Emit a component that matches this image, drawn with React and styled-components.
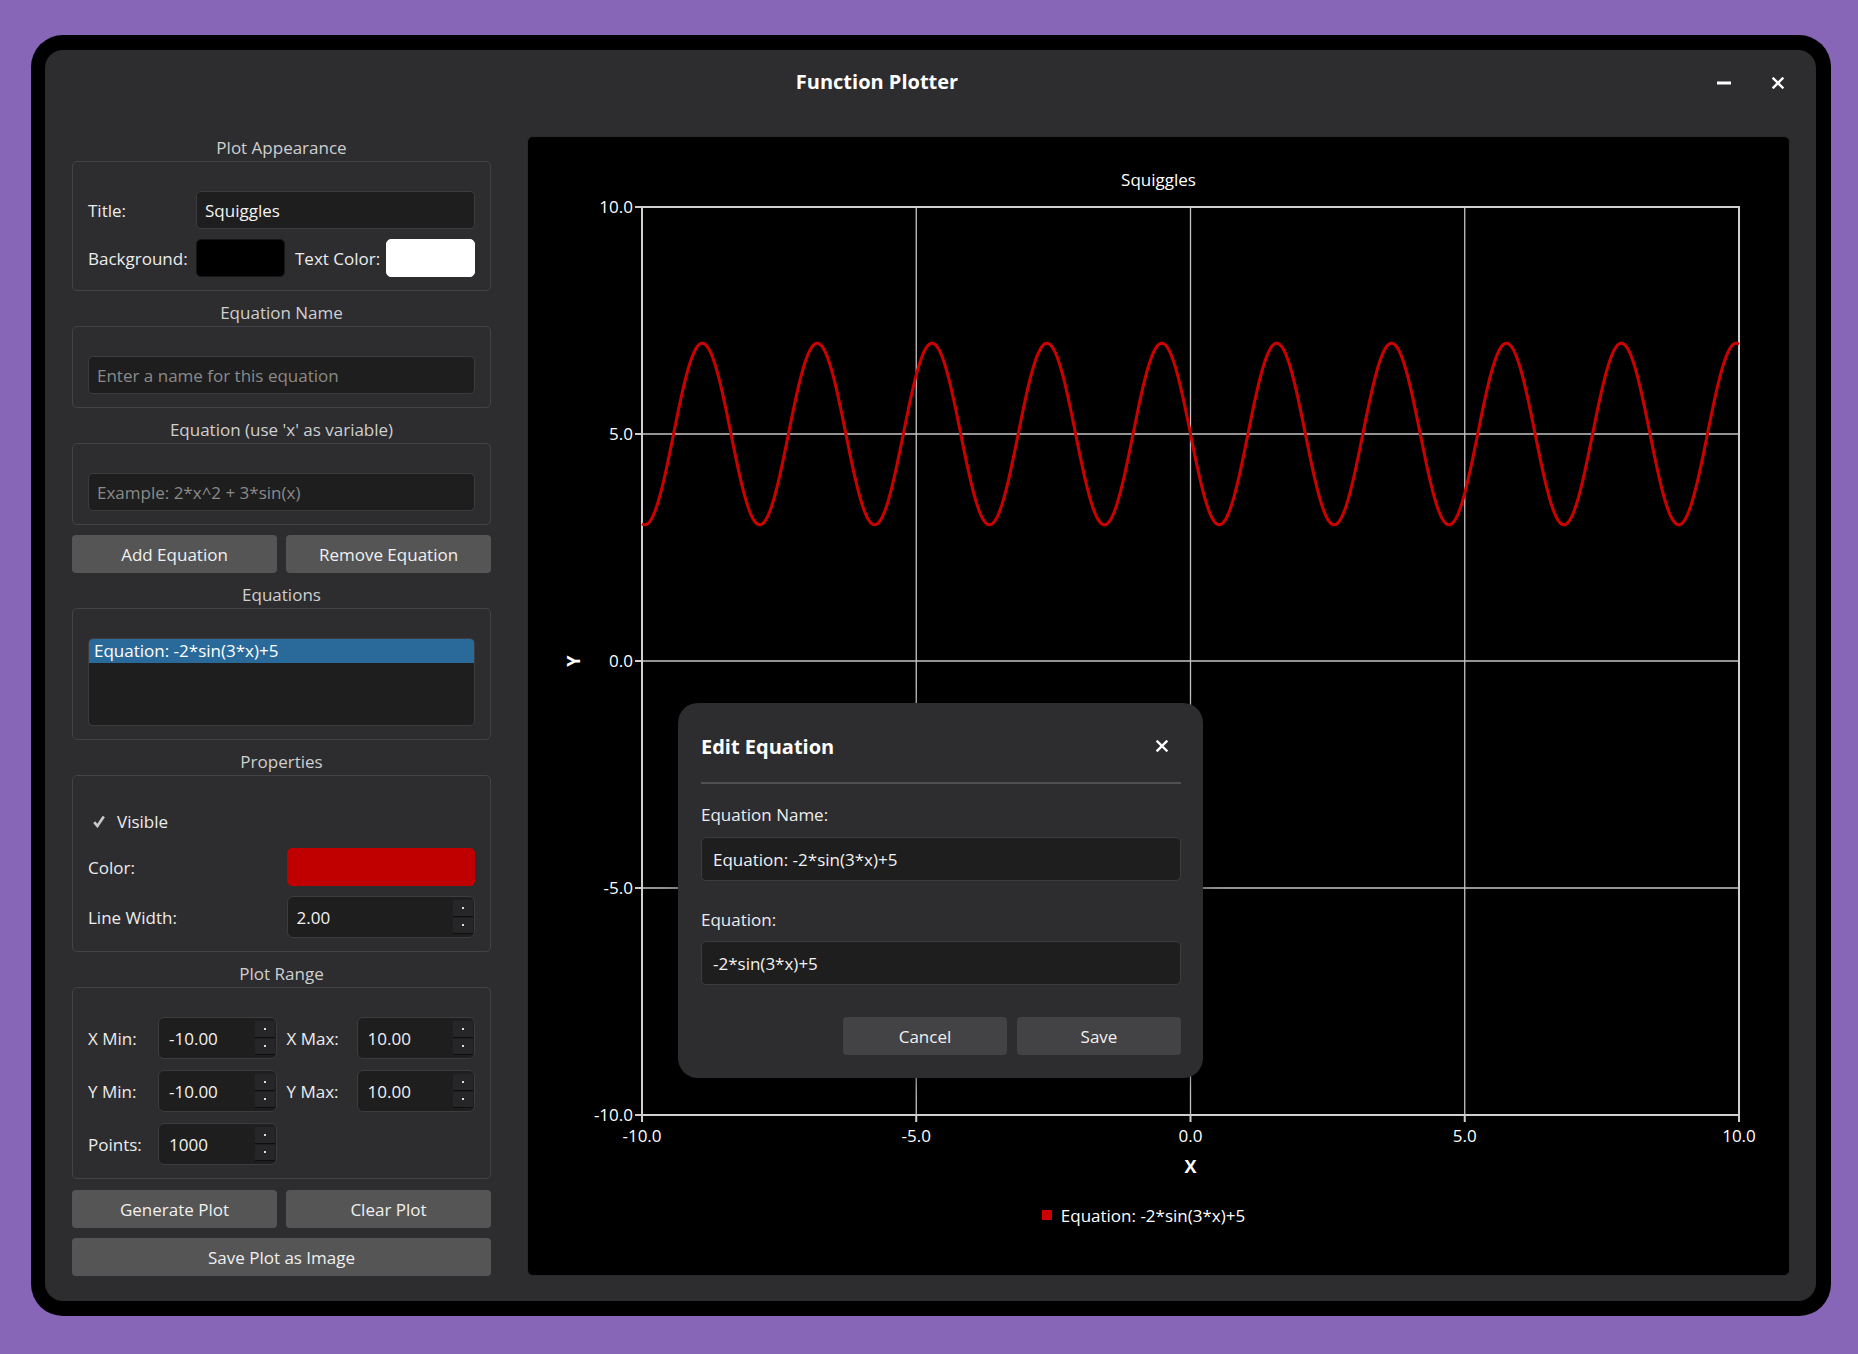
import React from 'react';
import styled, { createGlobalStyle } from 'styled-components';

const GlobalStyle = createGlobalStyle`
  html, body {
    margin: 0;
    padding: 0;
    background: #8765b7;
  }
  body {
    font-family: "Open Sans", "Noto Sans", sans-serif;
  }
  * {
    box-sizing: border-box;
  }
`;

const Page = styled.div`
  width: 1858px;
  height: 1354px;
  padding: 35px 0 0 31px;
`;

const Frame = styled.div`
  width: 1800px;
  height: 1281px;
  background: #000;
  border-radius: 32px;
  padding: 15px 15px 15px 14px;
`;

const Window = styled.div`
  position: relative;
  height: 100%;
  background: #2d2d30;
  border-radius: 18px;
  display: flex;
  flex-direction: column;
  color: #e6e6e6;
  font-size: 17px;
`;

const TitleBar = styled.div`
  height: 62px;
  display: flex;
  align-items: center;
  gap: 20px;
  padding: 0 21px 0 22px;
`;

const WindowTitle = styled.div`
  flex: 1;
  text-align: center;
  font-size: 20px;
  font-weight: 700;
  color: #fff;
`;

const IconButton = styled.div`
  width: 34px;
  height: 24px;
  margin-top: 4px;
  display: flex;
  align-items: center;
  justify-content: center;
  color: #fff;
`;

const Body = styled.div`
  flex: 1;
  min-height: 0;
  display: flex;
  gap: 36px;
  padding: 24px 26px 25px 27px;
`;

const Sidebar = styled.div`
  width: 419px;
  flex-shrink: 0;
  display: flex;
  flex-direction: column;
  gap: 10px;
`;

const GroupWrap = styled.div`
  display: flex;
  flex-direction: column;
`;

const GroupTitle = styled.div`
  height: 25px;
  display: flex;
  align-items: center;
  justify-content: center;
  color: #cfcfcf;
  padding-bottom: 2px;
`;

const GroupBox = styled.div`
  border: 1px solid #434346;
  border-radius: 5px;
  padding: 29px 15px 13px;
`;

const FormGrid = styled.div`
  display: grid;
  grid-template-columns: ${p => p.$cols};
  grid-auto-rows: ${p => p.$rows || 'auto'};
  column-gap: 10px;
  row-gap: ${p => p.$rowGap || 10}px;
  align-items: center;
`;

const Label = styled.div`
  color: #ececec;
  white-space: nowrap;
`;

const TextInput = styled.input`
  width: 100%;
  height: ${p => p.$h || 38}px;
  grid-column: ${p => p.$span || 'auto'};
  background: #1e1e1e;
  border: 1px solid #3c3c3e;
  border-radius: 5px;
  padding: 0 ${p => p.$pad || 8}px;
  color: #f2f2f2;
  font-family: inherit;
  font-size: 17px;
  outline: none;

  &::placeholder {
    color: #8a8a8a;
  }
`;

const Swatch = styled.div`
  height: 38px;
  border-radius: 5px;
  background: ${p => p.$color};
  border: 1px solid ${p => p.$edge || p.$color};
`;

const ButtonRow = styled.div`
  display: grid;
  grid-template-columns: 1fr 1fr;
  gap: 9px;
  margin-top: ${p => p.$mt || 0}px;
`;

const Button = styled.button`
  height: 38px;
  border: none;
  border-radius: 4px;
  background: ${p => p.$bg || '#555555'};
  color: #f0f0f0;
  font-family: inherit;
  font-size: 17px;
  padding: 0;
`;

const ListBox = styled.div`
  height: 88px;
  background: #1e1e1e;
  border: 1px solid #3c3c3e;
  border-radius: 5px;
  overflow: hidden;
`;

const ListItem = styled.div`
  height: 24px;
  line-height: 24px;
  padding-left: 5px;
  color: #fff;
  background: ${p => (p.$selected ? '#2a6a9b' : 'transparent')};
`;

const CheckRow = styled.div`
  grid-column: 1 / -1;
  height: 33px;
  display: flex;
  align-items: center;
  gap: 12px;
  padding-left: 5px;
`;

const Spin = styled.div`
  height: 42px;
  display: flex;
  align-items: stretch;
  background: #1e1e1e;
  border: 1px solid #3c3c3e;
  border-radius: 6px;
  padding: 3px 1px 3px 0;
`;

const SpinValue = styled.div`
  flex: 1;
  display: flex;
  align-items: center;
  padding-left: ${p => p.$pad || 9}px;
  color: #f2f2f2;
`;

const SpinArrows = styled.div`
  width: 20px;
  display: flex;
  flex-direction: column;
  gap: 1px;
`;

const SpinHalf = styled.div`
  flex: 1;
  background: #262628;
  border-bottom: 1px solid #0e0e0e;
  display: flex;
  align-items: center;
  justify-content: center;

  &::after {
    content: '';
    width: 2px;
    height: 2px;
    background: #ddd;
  }
`;

const PlotPanel = styled.div`
  flex: 1;
  min-width: 0;
  background: #000;
  border: 1px solid #2a2a2c;
  border-radius: 6px;
  display: flex;
  flex-direction: column;
  align-items: center;
  padding-top: 32px;
`;

const PlotTitle = styled.div`
  height: 22px;
  line-height: 22px;
  color: #fff;
  font-size: 17px;
`;

const Chart = styled.svg`
  display: block;
  flex-shrink: 0;
`;

const Legend = styled.div`
  margin-top: 24px;
  height: 20px;
  display: flex;
  align-items: center;
  gap: 9px;
  color: #fff;
  margin-right: 30px;
`;

const LegendMark = styled.div`
  width: 10px;
  height: 10px;
  background: ${p => p.$color};
`;

const Dialog = styled.div`
  position: absolute;
  left: 633px;
  top: 653px;
  width: 525px;
  height: 375px;
  background: #2d2d30;
  border-radius: 20px;
  padding: 23px 22px 23px 23px;
  display: flex;
  flex-direction: column;
  box-shadow: 0 4px 18px rgba(0, 0, 0, 0.35);
`;

const DialogHeader = styled.div`
  height: 40px;
  display: flex;
  align-items: center;
  justify-content: space-between;
  padding-right: 13px;
`;

const DialogTitle = styled.div`
  font-size: 20px;
  font-weight: 700;
  color: #fff;
`;

const Divider = styled.div`
  height: 2px;
  background: #505053;
  margin: 16px 0 20px;
`;

const FieldLabel = styled.div`
  height: 22px;
  line-height: 22px;
  color: #ececec;
  margin-top: ${p => p.$mt || 0}px;
  margin-bottom: ${p => p.$mb || 11}px;
`;

const DialogActions = styled.div`
  margin-top: auto;
  display: flex;
  justify-content: flex-end;
  gap: 10px;

  & > button {
    width: 164px;
  }
`;

const CloseIcon = ({ size = 12 }) => (
  <svg width={size} height={size} viewBox="0 0 12 12">
    <path d="M1.5 1.5 L10.5 10.5 M10.5 1.5 L1.5 10.5" stroke="#fff" strokeWidth="2.4" strokeLinecap="square" />
  </svg>
);

const MinIcon = () => (
  <svg width="14" height="4" viewBox="0 0 14 4">
    <rect x="0" y="0.5" width="14" height="3" fill="#fff" />
  </svg>
);

const CheckIcon = () => (
  <svg width="12" height="13" viewBox="0 0 12 13">
    <path d="M1.2 7.2 L4.4 11 L10.8 1.5" fill="none" stroke="#c9c9c9" strokeWidth="2.6" />
  </svg>
);

const SpinBox = ({ value, pad }) => (
  <Spin>
    <SpinValue $pad={pad}>{value}</SpinValue>
    <SpinArrows>
      <SpinHalf />
      <SpinHalf />
    </SpinArrows>
  </Spin>
);

const Group = ({ title, children }) => (
  <GroupWrap>
    <GroupTitle>{title}</GroupTitle>
    <GroupBox>{children}</GroupBox>
  </GroupWrap>
);

// chart geometry, in svg pixels
const W = 1261;
const H = 990;
const L = 114;
const R = 1211;
const T = 16;
const B = 924;
const sx = v => L + ((v + 10) / 20) * (R - L);
const sy = v => T + ((10 - v) / 20) * (B - T);
const ticks = [-10, -5, 0, 5, 10];

const curve = (() => {
  const pts = [];
  for (let i = 0; i <= 1000; i++) {
    const x = -10 + (20 * i) / 1000;
    const y = -2 * Math.sin(3 * x) + 5;
    pts.push(`${sx(x).toFixed(2)},${sy(y).toFixed(2)}`);
  }
  return 'M' + pts.join(' L');
})();

const PlotChart = () => (
  <Chart width={W} height={H} viewBox={`0 0 ${W} ${H}`} fontFamily='"Open Sans", sans-serif' fontSize="17">
    {ticks.slice(1, -1).map(t => (
      <g key={'g' + t} stroke="#c4c4c4" strokeWidth="1.3">
        <line x1={sx(t)} y1={T} x2={sx(t)} y2={B} />
        <line x1={L} y1={sy(t)} x2={R} y2={sy(t)} />
      </g>
    ))}
    <rect x={L} y={T} width={R - L} height={B - T} fill="none" stroke="#cfcfcf" strokeWidth="2" />
    {ticks.map(t => (
      <g key={'t' + t} stroke="#cfcfcf" strokeWidth="2">
        <line x1={L - 7} y1={sy(t)} x2={L} y2={sy(t)} />
        <line x1={sx(t)} y1={B} x2={sx(t)} y2={B + 7} />
      </g>
    ))}
    {ticks.map(t => (
      <text key={'yl' + t} x={L - 9} y={sy(t) + 6} fill="#fff" textAnchor="end">
        {t.toFixed(1)}
      </text>
    ))}
    {ticks.map(t => (
      <text key={'xl' + t} x={sx(t)} y={B + 27} fill="#fff" textAnchor="middle">
        {t.toFixed(1)}
      </text>
    ))}
    <text x={sx(0)} y={B + 58} fill="#fff" textAnchor="middle" fontWeight="700" fontSize="18">X</text>
    <text x={46} y={sy(0)} fill="#fff" textAnchor="middle" fontWeight="700" fontSize="18" transform={`rotate(-90 46 ${sy(0)}) translate(0 6)`}>Y</text>
    <path d={curve} fill="none" stroke="#cc0000" strokeWidth="3" strokeLinejoin="round" />
  </Chart>
);

export default function App() {
  return (
    <Page>
      <GlobalStyle />
      <Frame>
        <Window>
          <TitleBar>
            <WindowTitle>Function Plotter</WindowTitle>
            <IconButton><MinIcon /></IconButton>
            <IconButton><CloseIcon /></IconButton>
          </TitleBar>
          <Body>
            <Sidebar>
              <Group title="Plot Appearance">
                <FormGrid $cols="98px 89px minmax(0, 1fr) 89px" $rows="38px">
                  <Label>Title:</Label>
                  <TextInput $span="2 / 5" defaultValue="Squiggles" readOnly />
                  <Label>Background:</Label>
                  <Swatch $color="#000" $edge="#151515" />
                  <Label>Text Color:</Label>
                  <Swatch $color="#fff" />
                </FormGrid>
              </Group>
              <Group title="Equation Name">
                <TextInput placeholder="Enter a name for this equation" readOnly />
              </Group>
              <Group title="Equation (use 'x' as variable)">
                <TextInput placeholder="Example: 2*x^2 + 3*sin(x)" readOnly />
              </Group>
              <ButtonRow>
                <Button>Add Equation</Button>
                <Button>Remove Equation</Button>
              </ButtonRow>
              <Group title="Equations">
                <ListBox>
                  <ListItem $selected>Equation: -2*sin(3*x)+5</ListItem>
                </ListBox>
              </Group>
              <Group title="Properties">
                <FormGrid $cols="minmax(0, 1fr) minmax(0, 1fr)">
                  <CheckRow>
                    <CheckIcon />
                    <Label>Visible</Label>
                  </CheckRow>
                  <Label>Color:</Label>
                  <Swatch $color="#c00000" />
                  <Label>Line Width:</Label>
                  <SpinBox value="2.00" />
                </FormGrid>
              </Group>
              <Group title="Plot Range">
                <FormGrid $cols="60px minmax(0, 1fr) 60px minmax(0, 1fr)" $rows="42px" $rowGap={11}>
                  <Label>X Min:</Label>
                  <SpinBox value="-10.00" pad={10} />
                  <Label>X Max:</Label>
                  <SpinBox value="10.00" pad={10} />
                  <Label>Y Min:</Label>
                  <SpinBox value="-10.00" pad={10} />
                  <Label>Y Max:</Label>
                  <SpinBox value="10.00" pad={10} />
                  <Label>Points:</Label>
                  <SpinBox value="1000" pad={10} />
                </FormGrid>
              </Group>
              <ButtonRow $mt={1}>
                <Button>Generate Plot</Button>
                <Button>Clear Plot</Button>
              </ButtonRow>
              <Button>Save Plot as Image</Button>
            </Sidebar>
            <PlotPanel>
              <PlotTitle>Squiggles</PlotTitle>
              <PlotChart />
              <Legend>
                <LegendMark $color="#cc0000" />
                <span>Equation: -2*sin(3*x)+5</span>
              </Legend>
            </PlotPanel>
          </Body>
          <Dialog>
            <DialogHeader>
              <DialogTitle>Edit Equation</DialogTitle>
              <CloseIcon size={12} />
            </DialogHeader>
            <Divider />
            <FieldLabel>Equation Name:</FieldLabel>
            <TextInput $h={44} $pad={11} defaultValue="Equation: -2*sin(3*x)+5" readOnly />
            <FieldLabel $mt={28} $mb={10}>Equation:</FieldLabel>
            <TextInput $h={44} $pad={11} defaultValue="-2*sin(3*x)+5" readOnly />
            <DialogActions>
              <Button $bg="#434346">Cancel</Button>
              <Button $bg="#434346">Save</Button>
            </DialogActions>
          </Dialog>
        </Window>
      </Frame>
    </Page>
  );
}
